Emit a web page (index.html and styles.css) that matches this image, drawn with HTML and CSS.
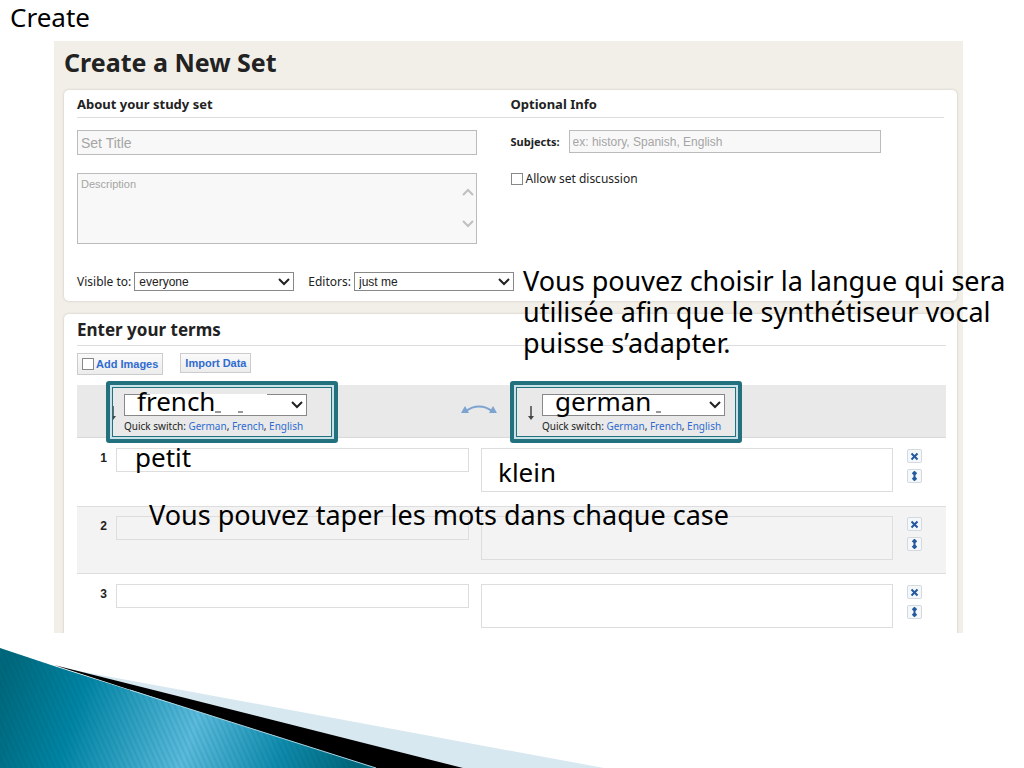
FILE: index.html
```
<!DOCTYPE html>
<html lang="fr">
<head>
  <meta charset="UTF-8" />
  <meta name="viewport" content="width=device-width, initial-scale=1.0"/>
  <title>Create a New Set</title>
  <link rel="stylesheet" href="styles.css">
</head>
<body>

  <h1 class="slide-title">Create</h1>

  <main class="site">
    <h2 class="site-title">Create a New Set</h2>

    <section class="panel about">
      <div class="columns headings">
        <h3>About your study set</h3>
        <h3>Optional Info</h3>
      </div>
      <div class="columns">
        <div class="about-main">
          <input type="text" class="set-title" placeholder="Set Title" aria-label="Set Title" />
          <div class="description">
            <textarea placeholder="Description" aria-label="Description"></textarea>
            <svg class="scroll-arrows" width="12" height="42" viewBox="0 0 12 42" fill="none" stroke="#c0c0c0" stroke-width="2">
              <path d="M1 8l5-5 5 5M1 34l5 5 5-5"/>
            </svg>
          </div>
        </div>
        <div class="about-side">
          <div class="field">
            <label for="subjects">Subjects:</label>
            <input type="text" id="subjects" placeholder="ex: history, Spanish, English" />
          </div>
          <div class="check">
            <input type="checkbox" id="discussion" />
            <label for="discussion">Allow set discussion</label>
          </div>
        </div>
      </div>
      <div class="access">
        <label for="visible">Visible to:</label>
        <select id="visible"><option>everyone</option></select>
        <label for="editors" class="editors">Editors:</label>
        <select id="editors"><option>just me</option></select>
      </div>
      <p class="note note-language">Vous pouvez choisir la langue qui sera utilisée afin que le synthétiseur vocal puisse s’adapter.</p>
    </section>

    <section class="panel terms">
      <h3 class="terms-title">Enter your terms</h3>
      <div class="tools">
        <label class="tool"><input type="checkbox" />Add Images</label>
        <button type="button" class="tool import">Import Data</button>
      </div>

      <div class="languages">
        <div class="language">
          <svg class="down" width="8" height="16" viewBox="0 0 8 16"><path d="M4 1v12" stroke="#444" stroke-width="1.5"/><path d="M1 11h6l-3 4z" fill="#444"/></svg>
          <div class="picker">
            <select aria-label="Term language"><option></option></select>
            <span class="eraser"></span>
            <svg class="specks" width="32" height="3" viewBox="0 0 32 3"><path d="M1 2h6M24 2h5" stroke="#333"/></svg>
            <span class="note word">french</span>
            <p>Quick switch: <a href="#">German</a>, <a href="#">French</a>, <a href="#">English</a></p>
          </div>
          <div class="frame"></div>
        </div>
        <svg class="swap" width="36" height="12" viewBox="0 0 36 12">
          <path d="M5 7C13 1 23 1 31 7" fill="none" stroke="#7da3d0" stroke-width="2"/>
          <path d="M0 9l4-7 4 7zM36 9l-4-7-4 7z" fill="#7da3d0"/>
        </svg>
        <div class="language target">
          <svg class="down" width="8" height="16" viewBox="0 0 8 16"><path d="M4 1v12" stroke="#444" stroke-width="1.5"/><path d="M1 11h6l-3 4z" fill="#444"/></svg>
          <div class="picker">
            <select aria-label="Definition language"><option></option></select>
            <svg class="specks" width="32" height="3" viewBox="0 0 32 3"><path d="M24 2h5" stroke="#333"/></svg>
            <span class="note word">german</span>
            <p>Quick switch: <a href="#">German</a>, <a href="#">French</a>, <a href="#">English</a></p>
          </div>
          <div class="frame"></div>
        </div>
      </div>

      <div class="row">
        <span class="number">1</span>
        <div class="term"><input type="text" aria-label="Term 1" /><span class="note word">petit</span></div>
        <div class="definition"><textarea aria-label="Definition 1"></textarea><span class="note word">klein</span></div>
        <div class="actions">
          <button type="button" aria-label="Delete"><svg width="9" height="9" viewBox="0 0 18 18"><path d="M3 3l12 12M15 3L3 15"/></svg></button>
          <button type="button" aria-label="Move"><svg width="9" height="10" viewBox="0 0 18 20"><path d="M9 3v14M5 6l4-4 4 4M5 14l4 4 4-4"/></svg></button>
        </div>
      </div>
      <div class="row even">
        <span class="number">2</span>
        <div class="term"><input type="text" aria-label="Term 2" /></div>
        <div class="definition"><textarea aria-label="Definition 2"></textarea></div>
        <div class="actions">
          <button type="button" aria-label="Delete"><svg width="9" height="9" viewBox="0 0 18 18"><path d="M3 3l12 12M15 3L3 15"/></svg></button>
          <button type="button" aria-label="Move"><svg width="9" height="10" viewBox="0 0 18 20"><path d="M9 3v14M5 6l4-4 4 4M5 14l4 4 4-4"/></svg></button>
        </div>
        <p class="note note-words">Vous pouvez taper les mots dans chaque case</p>
      </div>
      <div class="row last">
        <span class="number">3</span>
        <div class="term"><input type="text" aria-label="Term 3" /></div>
        <div class="definition"><textarea aria-label="Definition 3"></textarea></div>
        <div class="actions">
          <button type="button" aria-label="Delete"><svg width="9" height="9" viewBox="0 0 18 18"><path d="M3 3l12 12M15 3L3 15"/></svg></button>
          <button type="button" aria-label="Move"><svg width="9" height="10" viewBox="0 0 18 20"><path d="M9 3v14M5 6l4-4 4 4M5 14l4 4 4-4"/></svg></button>
        </div>
      </div>
    </section>
  </main>

  <svg class="swoosh" width="604" height="120" viewBox="0 0 604 120">
    <defs>
      <linearGradient id="teal" gradientUnits="userSpaceOnUse" x1="0" y1="40" x2="340" y2="150">
        <stop offset="0" stop-color="#00687c"/>
        <stop offset="0.22" stop-color="#0084a3"/>
        <stop offset="0.55" stop-color="#5bbbdc"/>
        <stop offset="0.8" stop-color="#0f8bac"/>
        <stop offset="1" stop-color="#00687c"/>
      </linearGradient>
      <pattern id="stripes" width="5" height="5" patternUnits="userSpaceOnUse" patternTransform="rotate(-24)">
        <path d="M1 0v5" stroke="#004a60" stroke-opacity="0.1" stroke-width="2"/>
      </pattern>
    </defs>
    <path d="M57 19L604 120H440z" fill="#d8e8f0"/>
    <path d="M54 17L463 120H370z" fill="#000"/>
    <path d="M0 0L57 19 376 120H0z" fill="url(#teal)"/>
    <path d="M0 0L57 19 376 120H0z" fill="url(#stripes)"/>
    <path d="M130 42L376 120" stroke="#a9d5e4"/>
  </svg>

</body>
</html>
```
FILE: styles.css
```
* {
  box-sizing: border-box;
}

body {
  margin: 0;
  background: #fff;
  color: #222;
  font-family: "Noto Sans", sans-serif;
  font-size: 12px;
  line-height: 16px;
}

h1, h2, h3, p {
  margin: 0;
}

a {
  color: #2f6bd0;
  text-decoration: none;
}

input, textarea, select, button {
  margin: 0;
  font-family: "Liberation Sans", Arial, sans-serif;
  border-radius: 0;
}

input[type="text"], textarea {
  display: block;
  width: 100%;
  padding: 0 3px;
  background: #f8f8f8;
  border: 1px solid #bbb;
  resize: none;
}

::placeholder {
  color: #a5a5a5;
}

input[type="checkbox"] {
  appearance: none;
  width: 12px;
  height: 12px;
  background: #fff;
  border: 1px solid #888;
}

select {
  appearance: none;
  width: 160px;
  height: 19px;
  padding: 0 4px;
  color: #222;
  font-size: 12px;
  border: 1px solid #888;
  background: #fff url('data:image/svg+xml,<svg xmlns="http://www.w3.org/2000/svg" width="12" height="8" viewBox="0 0 12 8"><path d="M1 1l5 5 5-5" fill="none" stroke="%23222" stroke-width="2"/></svg>') no-repeat right 3px center;
}

/* text written over the form */
.slide-title,
.note {
  color: #000;
  font-size: 27px;
  font-weight: normal;
  line-height: 31px;
}

.note {
  position: absolute;
}

.slide-title,
.word {
  font-size: 26px;
}

.slide-title {
  padding: 2px 10px 8px;
}

.site {
  margin: 0 61px 0 54px;
  padding: 0 6px 0 10px;
  background: #f2efe8;
}

.site-title {
  height: 49px;
  font-size: 25px;
  line-height: 42px;
}

.panel {
  position: relative;
  padding: 0 13px;
  background: #fff;
  border-radius: 5px;
  box-shadow: 0 0 2px 1px #dedbd4;
}

.about {
  height: 211px;
  margin-bottom: 13px;
}

.columns {
  display: grid;
  grid-template-columns: 1fr 1fr;
}

.headings {
  margin-bottom: 12px;
  padding-top: 1px;
  border-bottom: 1px solid #ddd;
}

.headings h3 {
  font-size: 13px;
  line-height: 26px;
}

.about-main {
  padding-right: 34px;
}

.about-main .set-title {
  height: 25px;
  margin-bottom: 18px;
  font-size: 14px;
}

.description {
  position: relative;
}

.description textarea {
  height: 71px;
  padding: 4px 3px;
  font-size: 11px;
}

.scroll-arrows {
  position: absolute;
  right: 3px;
  top: 14px;
}

.field {
  display: flex;
  align-items: center;
  gap: 9px;
  margin: 0 63px 18px 0;
}

.field label {
  font-size: 11px;
  font-weight: bold;
}

.field input {
  flex: 1;
  height: 23px;
  font-size: 12px;
}

.check {
  display: flex;
  align-items: center;
  gap: 3px;
}

.access {
  display: flex;
  align-items: center;
  gap: 3px;
  margin-top: 28px;
}

.editors {
  margin-left: 11px;
}

.note-language {
  left: 459px;
  top: 175px;
  width: 490px;
  z-index: 1;
}

.terms {
  padding: 0 11px 0 13px;
  border-radius: 5px 5px 0 0;
  clip-path: inset(-4px -4px 0);
}

.terms-title {
  font-size: 17px;
  line-height: 31px;
  border-bottom: 1px solid #ddd;
}

.tools {
  display: flex;
  align-items: flex-start;
  gap: 17px;
  padding: 7px 0 10px;
}

.tool {
  display: flex;
  align-items: center;
  gap: 2px;
  height: 22px;
  padding: 0 4px;
  color: #2f6bd0;
  font-family: "Liberation Sans", Arial, sans-serif;
  font-size: 11px;
  font-weight: bold;
  background: linear-gradient(#fafafa, #ececec);
  border: 1px solid #ccc;
}

.import {
  height: 20px;
}

.languages {
  display: flex;
  position: relative;
  height: 53px;
  padding-left: 29px;
  background: #e9e9e9;
  border-bottom: 1px solid #d8d8d8;
}

.language {
  display: flex;
  position: relative;
  gap: 7px;
  width: 232px;
  padding: 9px 0 0 3px;
}

.target {
  padding-left: 17px;
}

.down {
  margin-top: 11px;
}

.frame {
  position: absolute;
  inset: -4px 0 -6px;
  border: 4px solid #23717f;
  border-radius: 3px;
  box-shadow: inset 0 0 0 2px #c9e2e8, inset 0 0 0 3px #23717f;
  pointer-events: none;
}

.picker {
  position: relative;
}

.picker select {
  display: block;
  width: 183px;
  height: 22px;
}

.picker p {
  margin-top: 2px;
  font-size: 10px;
}

.picker .word {
  left: 13px;
  top: -8px;
}

.eraser {
  position: absolute;
  left: 26px;
  top: 0;
  width: 117px;
  height: 3px;
  background: #fff;
}

.specks {
  position: absolute;
  left: 90px;
  top: 16px;
}

.swap {
  margin: 19px 13px 0 123px;
}

.row {
  display: flex;
  position: relative;
  height: 68px;
  padding-top: 10px;
}

.even {
  padding-top: 9px;
  background: #f3f3f3;
  border: solid #ddd;
  border-width: 1px 0;
}

.last {
  height: 59px;
}

.number {
  width: 30px;
  margin-right: 9px;
  font: bold 12px/20px "Liberation Sans", Arial, sans-serif;
  text-align: right;
}

.term,
.definition {
  position: relative;
  flex: 353;
  margin-right: 12px;
}

.definition {
  flex: 412;
  margin-right: 14px;
}

.row input,
.row textarea {
  height: 24px;
  background: transparent;
  border-color: #ddd;
}

.row textarea {
  height: 44px;
}

.term .word {
  left: 19px;
  top: -6px;
}

.definition .word {
  left: 17px;
  top: 9px;
}

.note-words {
  left: 72px;
  top: -8px;
}

.actions {
  display: flex;
  flex-direction: column;
  gap: 6px;
  width: 39px;
  padding-top: 1px;
}

.actions button {
  display: flex;
  align-items: center;
  justify-content: center;
  width: 15px;
  height: 14px;
  padding: 0;
  background: #f5f8fb;
  border: 1px solid #d5d9de;
  border-radius: 2px;
}

.actions path {
  fill: none;
  stroke: #2459a0;
  stroke-width: 4;
}

.swoosh {
  display: block;
  margin-top: 15px;
}
```
